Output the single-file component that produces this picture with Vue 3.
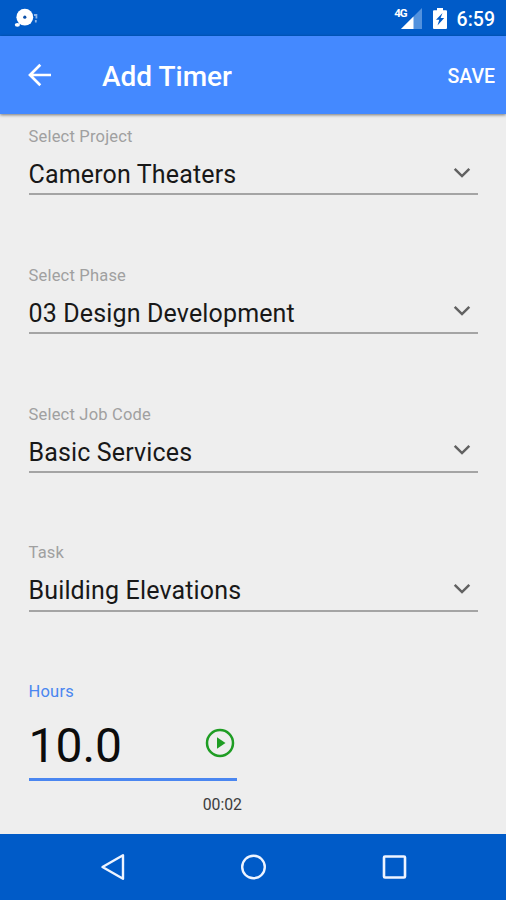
<script setup>
import { ref } from 'vue'

const fields = ref([
  { label: 'Select Project', value: 'Cameron Theaters' },
  { label: 'Select Phase', value: '03 Design Development' },
  { label: 'Select Job Code', value: 'Basic Services' },
  { label: 'Task', value: 'Building Elevations' }
])

const hours = ref('10.0')
const elapsed = ref('00:02')
</script>

<template>
  <div class="screen">
    <div class="status-bar">
      <svg class="notification-icon" width="24" height="20" viewBox="0 0 24 20">
        <circle cx="10.8" cy="9.2" r="8.4" fill="#fff" />
        <circle cx="10.8" cy="9.2" r="1.6" fill="#0b4fa8" />
        <ellipse cx="3.4" cy="16.8" rx="2.6" ry="1.9" fill="#fff" />
        <path d="M20 7h2.400v3.500M21.800 12v2.500" fill="none" stroke="#8db5e8" stroke-width="1.8" />
      </svg>
      <div class="status-right">
        <span class="network">4G</span>
        <svg class="signal-icon" width="21" height="21" viewBox="0 0 21 21">
          <path d="M0 21L21 0v21z" fill="#5292de" />
          <path d="M0 21L12.5 8.5V21z" fill="#fff" />
        </svg>
        <svg class="battery-icon" width="14" height="21" viewBox="0 0 14 21">
          <path d="M4 0h6v2.2h3q1 0 1 1V20q0 1-1 1H1q-1 0-1-1V3.200q0-1 1-1h3z" fill="#fff" />
          <path d="M9.500 5L3 11.800h3.300L4.500 17.500l6.700-7.500H7.600z" fill="#005bc8" />
        </svg>
        <span class="clock">6:59</span>
      </div>
    </div>

    <header class="toolbar">
      <svg class="back-icon" width="24" height="24" viewBox="0 0 24 24">
        <path d="M23 12H2M12.300 1.700L2 12l10.300 10.300" fill="none" stroke="#fff" stroke-width="2.700" />
      </svg>
      <h1 class="title">Add Timer</h1>
      <button class="save-btn">SAVE</button>
    </header>

    <main class="form">
      <div v-for="field in fields" :key="field.label" class="field">
        <label class="label">{{ field.label }}</label>
        <div class="select">
          <span class="value">{{ field.value }}</span>
          <svg class="chevron" width="18" height="12" viewBox="0 0 18 12">
            <path d="M1.700 1.800L9 9.100l7.300-7.300" fill="none" stroke="#616161" stroke-width="2.500" />
          </svg>
        </div>
      </div>

      <div class="hours">
        <label class="label active">Hours</label>
        <div class="hours-input">
          <span class="hours-value">{{ hours }}</span>
          <svg class="play-icon" width="30" height="30" viewBox="0 0 30 30">
            <circle cx="15" cy="15" r="13" fill="none" stroke="#1f9d24" stroke-width="2.500" />
            <path d="M12 9.200v11.600l8.500-5.800z" fill="#1f9d24" />
          </svg>
        </div>
        <div class="elapsed">{{ elapsed }}</div>
      </div>
    </main>

    <nav class="nav-bar">
      <svg width="28" height="30" viewBox="0 0 28 30">
        <path d="M24 3.300v23.400L3.500 15z" fill="none" stroke="#eef4ff" stroke-width="2.400" stroke-linejoin="round" />
      </svg>
      <svg width="28" height="30" viewBox="0 0 28 30">
        <circle cx="14.500" cy="15" r="11.300" fill="none" stroke="#eef4ff" stroke-width="2.400" />
      </svg>
      <svg width="28" height="30" viewBox="0 0 28 30">
        <rect x="4" y="4.500" width="21" height="21" rx="1" fill="none" stroke="#eef4ff" stroke-width="2.600" />
      </svg>
    </nav>
  </div>
</template>

<style>
body {
  margin: 0;
  background: #eee;
}
</style>

<style scoped>
.screen {
  display: flex;
  flex-direction: column;
  height: 900px;
  overflow: hidden;
  background: #eee;
  font-family: Roboto, "Liberation Sans", sans-serif;
}

.status-bar {
  display: flex;
  justify-content: space-between;
  height: 35.5px;
  box-sizing: border-box;
  padding: 8px 11px 0 14px;
  background: #005bc8;
}

.status-right {
  display: flex;
  color: #fff;
}

.network {
  margin-right: -6px;
  font-size: 11.5px;
  font-weight: 700;
  line-height: 11px;
  letter-spacing: -1px;
}

.battery-icon {
  margin-left: 11px;
}

.clock {
  margin-left: 10px;
  font-size: 19.5px;
  font-weight: 500;
  line-height: 23px;
}

.toolbar {
  display: flex;
  align-items: center;
  height: 78.5px;
  box-sizing: border-box;
  padding: 2px 11px 0 28px;
  background: #4489ff;
  box-shadow: 0 1px 3px rgba(0, 0, 0, 0.5);
  color: #fff;
}

.back-icon {
  margin-bottom: 2px;
}

.title {
  flex: 1;
  margin: 1px 0 0 50px;
  font-size: 28px;
  font-weight: 500;
}

.save-btn {
  margin-top: 2px;
  padding: 0;
  border: none;
  background: none;
  color: #fff;
  font-family: inherit;
  font-size: 19.5px;
  font-weight: 500;
}

.form {
  flex: 1;
  padding: 13px 28px 0 28.5px;
}

.field {
  height: 138.75px;
}

.label {
  display: block;
  height: 20px;
  line-height: 20px;
  font-size: 16.5px;
  letter-spacing: 0.2px;
  color: #a0a0a0;
}

.label.active {
  color: #4a86f0;
}

.select {
  display: flex;
  align-items: center;
  justify-content: space-between;
  height: 48.25px;
  box-sizing: border-box;
  padding: 10px 7px 0 0;
  border-bottom: 2px solid #a4a4a4;
}

.value {
  font-size: 25px;
  letter-spacing: 0.15px;
  line-height: 34px;
  color: #181818;
}

.chevron {
  margin-bottom: 5px;
}

.hours {
  width: 208.5px;
}

.hours-input {
  display: flex;
  align-items: center;
  justify-content: space-between;
  height: 78.5px;
  box-sizing: border-box;
  padding: 12px 2px 0 0;
  border-bottom: 3px solid #4a86f0;
}

.hours-value {
  font-size: 48px;
  line-height: 60px;
  color: #0c0c0c;
}

.play-icon {
  margin-bottom: 5px;
}

.elapsed {
  margin: 14px -5px 0 0;
  font-size: 15.8px;
  line-height: 20px;
  text-align: right;
  color: #3c3c3c;
}

.nav-bar {
  display: flex;
  justify-content: center;
  align-items: center;
  gap: 112.5px;
  height: 66.5px;
  background: #005bc8;
}
</style>
